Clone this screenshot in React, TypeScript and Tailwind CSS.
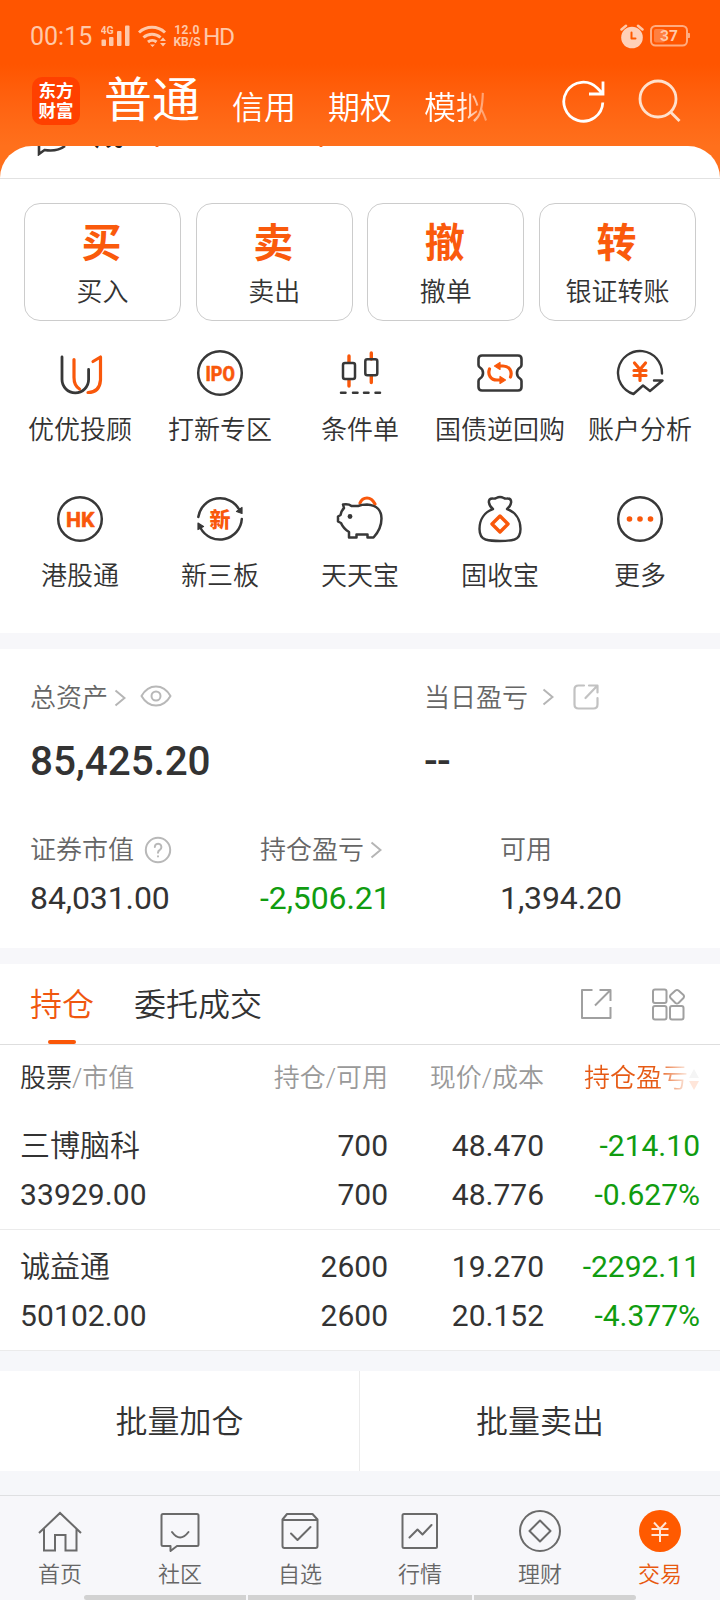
import React from "react";

const INK = "#383838";
const OR = "#f9580b";

function Svg({ w, h = w, className = "", children }: { w: number; h?: number; className?: string; children: React.ReactNode }) {
  return (
    <svg width={w} height={h} viewBox={`0 0 ${w} ${h}`} fill="none" strokeLinecap="round" strokeLinejoin="round" className={`block shrink-0 ${className}`}>
      {children}
    </svg>
  );
}

function StatusBar() {
  return (
    <div className="flex h-[72px] items-center font-normal text-[#ffc8a8]">
      <span className="ml-[30px] w-[71px] pt-[2px] text-[25px] leading-[70px] whitespace-nowrap">00:15</span>
      <svg width="30" height="22" viewBox="0 0 30 22" fill="currentColor" className="block shrink-0">
        <text x="-0.500" y="8.500" fontSize="10.500" fontWeight="700" fontFamily="Roboto">4G</text>
        <rect x="0.500" y="14.500" width="4.500" height="6.500" rx="1" />
        <rect x="8" y="12" width="4.500" height="9" rx="1" />
        <rect x="16" y="6" width="4.500" height="15" rx="1" />
        <rect x="24" y="0.500" width="4.500" height="20.500" rx="1" />
      </svg>
      <Svg w={30} h={24} className="ml-[7px]">
        <g stroke="currentColor" strokeWidth="3" strokeLinecap="butt">
          <path d="M1 8.500a19 19 0 0 1 26 0" />
          <path d="M5.500 13.500a12.500 12.500 0 0 1 17 0" />
          <path d="M10 18a6.500 6.500 0 0 1 8.500 0" />
        </g>
        <path d="M12 20.500h5l-2.500 2.500zM22 17l3-3.500 3 3.500zM22 19l3 3.500 3-3.500z" fill="currentColor" />
      </Svg>
      <div className="ml-[4px] w-[30px] text-center text-[12px] leading-[12px] font-bold whitespace-nowrap">
        <div className="tracking-[0.4px]">12.0</div>
        <div>KB/S</div>
      </div>
      <span className="ml-[1px] pt-[2px] text-[24.500px] leading-[70px] tracking-[-1.5px]">HD</span>
      <Svg w={24} h={25} className="ml-auto">
        <circle cx="12" cy="13.500" r="10.800" fill="#ffd0b8" />
        <path d="M1.500 5.500L6 1.800M22.500 5.500L18 1.800" stroke="#ffc8a8" strokeWidth="2.500" />
        <path d="M11.500 8.500v6h4" stroke="#ff5a00" strokeWidth="2" />
      </Svg>
      <Svg w={40} h={22} className="mr-[30px] ml-[6px]">
        <rect x="1" y="1" width="36" height="19.500" rx="4.500" stroke="#ffac80" strokeWidth="2" />
        <rect x="4" y="4" width="11" height="13.500" rx="2" fill="#ff8040" />
        <path d="M38 8.500h1.500v4H38z" fill="#ffac80" stroke="#ffac80" />
        <text x="19" y="16" textAnchor="middle" fontSize="15.500" fontWeight="700" fontFamily="Roboto" fill="#ffc8a8">37</text>
      </Svg>
    </div>
  );
}

function Header() {
  return (
    <header className="h-[178px] bg-linear-to-b from-[#ff5500] from-[36%] to-[#ff701c] to-[82%]">
      <StatusBar />
      <div className="flex h-[74px] text-white">
        <div className="mt-[5px] ml-8 flex h-12 w-12 flex-col items-center justify-center rounded-[10px] bg-[#ff4000] text-[17.500px] leading-[20px] font-bold">
          <span>东方</span>
          <span>财富</span>
        </div>
        <div className="ml-6 flex gap-8">
          <span className="text-[48px] leading-[58px] font-normal">普通</span>
          <span className="pt-[6px] text-[32px] leading-[60px]">信用</span>
          <span className="pt-[6px] text-[32px] leading-[60px]">期权</span>
          <span className="bg-linear-to-r from-white from-[55%] to-white/30 bg-clip-text pt-[6px] text-[32px] leading-[60px] text-transparent">模拟</span>
        </div>
        <Svg w={44} className="mt-[7px] ml-[73px]">
          <path d="M41.800 23.500A19.500 19.500 0 1 1 36.500 9.300L41 14M42 2.500v12.500H28" stroke="#fff" strokeWidth="2.800" strokeLinecap="butt" strokeLinejoin="miter" />
        </Svg>
        <Svg w={44} className="mt-[7px] ml-[32px]">
          <g stroke="#ffe0cc" strokeWidth="2.800" strokeLinecap="butt">
            <circle cx="21" cy="20" r="18" />
            <path d="M33.500 33L42.500 42" />
          </g>
        </Svg>
      </div>
    </header>
  );
}

const trades = [
  ["买", "买入"],
  ["卖", "卖出"],
  ["撤", "撤单"],
  ["转", "银证转账"],
];

const Ring = () => <circle cx="24" cy="24" r="21.800" stroke={INK} strokeWidth="2.500" />;

const shortcuts: { label: string; icon: React.ReactNode }[] = [
  {
    label: "优优投顾",
    icon: (
      <g strokeWidth="2.800">
        <path d="M6 8v22.500a13.300 13.300 0 0 0 26.600 0V20.500" stroke={INK} />
        <path d="M18 10.500v18q0 8 5.500 11.500M37 12.500l7.500-4.500V31q-1 12.500-12.500 12.500" stroke={OR} strokeWidth="3.200" />
      </g>
    ),
  },
  {
    label: "打新专区",
    icon: (
      <>
        <Ring />
        <text x="9.500" y="31.500" fontSize="21" fontWeight="800" fontFamily="Roboto" fill={OR} stroke={OR} strokeWidth="0.500" textLength="29.500" lengthAdjust="spacingAndGlyphs">IPO</text>
      </>
    ),
  },
  {
    label: "条件单",
    icon: (
      <>
        <path d="M13 7v6M13 31v6M35.300 4v6M35.300 27v6.500" stroke={OR} strokeWidth="3.400" />
        <g stroke={INK} strokeWidth="2.500">
          <rect x="7" y="14" width="12" height="16" rx="2" />
          <rect x="29.300" y="10.300" width="12" height="16" rx="2" />
          <path d="M5 43.700h4.500M17 43.700h4.500M28 43.700h4.500M39.500 43.700H44" />
        </g>
      </>
    ),
  },
  {
    label: "国债逆回购",
    icon: (
      <>
        <path d="M6 6.500h36q3.500 0 3.500 3.500v6q0 1.500-1.500 2.500a6.500 6.500 0 0 0 0 11q1.500 1 1.500 2.500v6q0 3.500-3.500 3.500H6q-3.500 0-3.500-3.500v-6q0-1.500 1.500-2.500a6.500 6.500 0 0 0 0-11q-1.500-1-1.500-2.500v-6q0-3.500 3.500-3.500z" stroke={INK} strokeWidth="2.600" />
        <path d="M23 17h4c6.500 0 9.500 5.500 7.500 11M25 31h-4c-6.500 0-9.500-5.500-7.500-11" stroke={OR} strokeWidth="3.200" />
        <path d="M18.500 17l5.500-3.500v7zM29.500 31l-5.500-3.500v7z" fill={OR} stroke={OR} strokeWidth="1.200" />
      </>
    ),
  },
  {
    label: "账户分析",
    icon: (
      <>
        <path d="M46 24.500A22 22 0 1 0 17.500 45L27 36.500l7 5.500L46.500 31.500H38" stroke={INK} strokeWidth="2.400" />
        <path d="M18.500 14l5.500 6.500 5.500-6.500M24 21v10.500M18 21.500h12M18 26.500h12" stroke={OR} strokeWidth="3.200" />
      </>
    ),
  },
  {
    label: "港股通",
    icon: (
      <>
        <Ring />
        <text x="10" y="31.500" fontSize="20.500" fontWeight="700" fontFamily="Roboto" fill={OR} stroke={OR} strokeWidth="0.600" textLength="28.500" lengthAdjust="spacingAndGlyphs">HK</text>
      </>
    ),
  },
  {
    label: "新三板",
    icon: (
      <>
        <path d="M2.300 22A22 22 0 0 1 43.500 15M45.800 24A22 22 0 0 1 4.500 33" stroke={INK} strokeWidth="2.500" />
        <path d="M40.500 16.500l5.500-4v6zM7.500 31.500l-5.500 3v-6.500z" fill={INK} stroke={INK} strokeWidth="1.200" />
        <text x="24" y="31.500" textAnchor="middle" fontSize="21" fontWeight="900" fontFamily="Noto Sans CJK SC" fill={OR}>新</text>
      </>
    ),
  },
  {
    label: "天天宝",
    icon: (
      <>
        <path d="M24 8q2-5 7-5t8 6" stroke={OR} strokeWidth="3.200" />
        <path d="M22 11q4-1.500 9-1.500C41 10 45.500 16 45.500 23.500c0 6-2.500 13-8 19h-6V39.500H20.500v3H13V37C9 34.500 6.500 31.500 5 28l-3-1.500v-5L4.500 20c.5-3 1.500-5 3.500-7L7 9.500q5.500-1 8.500 1.500z" stroke={INK} strokeWidth="2.500" />
        <circle cx="14" cy="21.500" r="2.400" fill={INK} />
      </>
    ),
  },
  {
    label: "固收宝",
    icon: (
      <>
        <path d="M17 14q-3.500-2.500-4.200-7 0-3.500 3.500-3.500 2.500.5 4-.5 3.700-2 7.400 0 1.500 1 4 .5 3.500 0 3.500 3.500-.7 4.500-4.200 7c8.500 3 13.500 10.500 13.500 20 0 5.500-1.500 9-6 10.500Q33 46 24 46T9.500 44.500C5 43 3.500 39.500 3.500 34 3.500 24.500 8.500 17 17 14z" stroke={INK} strokeWidth="2.400" />
        <path d="M24 21l8 8-8 8-8-8z" stroke={OR} strokeWidth="3.400" />
      </>
    ),
  },
  {
    label: "更多",
    icon: (
      <>
        <Ring />
        <g fill={OR}>
          <circle cx="13.500" cy="24" r="2.800" />
          <circle cx="24" cy="24" r="2.800" />
          <circle cx="34.500" cy="24" r="2.800" />
        </g>
      </>
    ),
  },
];

function Chevron({ className = "" }: { className?: string }) {
  return (
    <Svg w={12} h={18} className={className}>
      <path d="M1.500 1.500L10.500 9l-9 7.500" stroke="#b5b5b5" strokeWidth="2" strokeLinecap="butt" strokeLinejoin="miter" />
    </Svg>
  );
}

function Assets() {
  return (
    <section className="h-[299px] shrink-0 text-[26px] text-[#666]">
      <div className="flex h-[97px]">
        <div className="flex w-[424px] items-center pl-[30px]">
          <span className="pt-px">总资产</span>
          <Chevron className="mt-px ml-[6px]" />
          <Svg w={32} h={22} className="-mt-[3px] ml-[14px]">
            <g stroke="#b8b8b8" strokeWidth="2">
              <path d="M1.500 11Q7 1.500 16 1.500T30.500 11Q25 20.500 16 20.500T1.500 11z" />
              <circle cx="16" cy="11" r="4.500" />
            </g>
          </Svg>
        </div>
        <div className="flex items-center">
          <span className="pt-px">当日盈亏</span>
          <Chevron className="-mt-px ml-[14px]" />
          <Svg w={28} className="-mt-px ml-[18px]">
            <path d="M12 2.500H6.500q-4 0-4 4v15q0 4 4 4h15q4 0 4-4V15M13.500 15L25 3M17 2.500h8.500v7" stroke="#c2c2c2" strokeWidth="2.200" />
          </Svg>
        </div>
      </div>
      <div className="flex h-[30px] text-[40.500px] leading-[30px] font-medium text-[#333]">
        <div className="w-[424px] pl-[30px] tracking-[-0.1px]">85,425.20</div>
        <div className="tracking-[-0.7px]">--</div>
      </div>
      <div className="flex pt-[55px]">
        <div className="w-[260px] pl-[30px]">
          <div className="flex h-[38px] items-center">
            <span>证券市值</span>
            <Svg w={28} className="ml-[10px]">
              <circle cx="14" cy="14" r="12.200" stroke="#b8b8b8" strokeWidth="2" />
              <path d="M10.800 11a3.300 3.300 0 1 1 5 2.800q-1.800 1-1.800 3M14 20.200v.3" stroke="#b8b8b8" strokeWidth="2" />
            </Svg>
          </div>
          <div className="pt-[10px] text-[32px] leading-[38px] font-normal tracking-[-0.1px] text-[#333]">84,031.00</div>
        </div>
        <div className="w-[240px]">
          <div className="flex h-[38px] items-center">
            <span>持仓盈亏</span>
            <Chevron className="ml-[6px]" />
          </div>
          <div className="pt-[10px] text-[32px] leading-[38px] font-normal tracking-[-0.1px] text-[#109c10]">-2,506.21</div>
        </div>
        <div>
          <div className="flex h-[38px] items-center">可用</div>
          <div className="pt-[10px] text-[32px] leading-[38px] font-normal tracking-[-0.1px] text-[#333]">1,394.20</div>
        </div>
      </div>
    </section>
  );
}

const holdings = [
  { name: "三博脑科", value: "33929.00", cells: [["700", "700"], ["48.470", "48.776"], ["-214.10", "-0.627%"]] },
  { name: "诚益通", value: "50102.00", cells: [["2600", "2600"], ["19.270", "20.152"], ["-2292.11", "-4.377%"]] },
];

function Holdings() {
  return (
    <section className="shrink-0">
      <div className="flex h-[81px] items-start border-b border-[#dedede] pl-[30px] text-[32px] leading-[83px] text-[#333]">
        <div className="flex w-16 flex-col items-center text-[#f0570f]">
          <span className="h-[76px]">持仓</span>
          <span className="h-1 w-7 rounded-sm bg-[#fa5708]" />
        </div>
        <span className="ml-10">委托成交</span>
        <Svg w={32} className="mt-[24px] ml-auto">
          <path d="M12.500 2H2v28h28.500V19M15 17.500L29.500 3M19.500 2h11v11" stroke="#a0a0a0" strokeWidth="2" strokeLinecap="butt" />
        </Svg>
        <Svg w={34} className="mt-[24px] mr-[35px] ml-[39px]">
          <g stroke="#a0a0a0" strokeWidth="2">
            <rect x="2" y="1.500" width="13.500" height="13.500" rx="2" />
            <rect x="2" y="18" width="13.500" height="13.500" rx="2" />
            <rect x="19" y="18" width="13.500" height="13.500" rx="2" />
            <path d="M24.500 2.500q1.500-1 3 0l5 4.500q1 1.500 0 3l-5 5q-1.500 1-3 0l-5-5q-1-1.500 0-3z" />
          </g>
        </Svg>
      </div>
      <div className="grid h-[64px] grid-cols-[200px_168px_156px_156px] px-5 text-right text-[26px] leading-[67px] whitespace-nowrap text-[#999]">
        <div className="text-left">
          <span className="text-[#333]">股票</span>/市值
        </div>
        <div>持仓/可用</div>
        <div>现价/成本</div>
        <div className="flex items-center justify-end">
          <span className="bg-linear-to-r from-[#e65a14] from-[70%] to-[#e65a14]/10 bg-clip-text text-transparent">持仓盈亏</span>
          <Svg w={12} h={24}>
            <path d="M1 11L6 2l5 9z" fill="#f5f5f5" />
            <path d="M1 14l5 9 5-9z" fill="#ffe6da" />
          </Svg>
        </div>
      </div>
      {holdings.map((h) => (
        <div key={h.name} className="grid h-[121px] grid-cols-[200px_168px_156px_156px] border-b border-[#ebebeb] px-5 pt-[12px] text-right text-[30px] leading-[49px] font-normal whitespace-nowrap text-[#333]">
          <div className="text-left">
            <div className="[font-weight:350]">{h.name}</div>
            <div className="tracking-[0.1px]">{h.value}</div>
          </div>
          {h.cells.map((pair, i) => (
            <div key={i} className={i === 2 ? "text-[#109c10]" : ""}>
              <div>{pair[0]}</div>
              <div>{pair[1]}</div>
            </div>
          ))}
        </div>
      ))}
    </section>
  );
}

const tabs: { label: string; icon: React.ReactNode }[] = [
  { label: "首页", icon: <path d="M2 22L23 2l21 20M7 18v21.500h11V24h10.500v15.500h11V18" strokeLinecap="butt" strokeLinejoin="miter" /> },
  {
    label: "社区",
    icon: (
      <>
        <path d="M6 3h34q1.500 0 1.500 1.500v29q0 1.500-1.500 1.500H20l-6.500 5v-5H6q-1.500 0-1.500-1.500v-29Q4.500 3 6 3z" />
        <path d="M15 21q8 11 16.500 0" />
      </>
    ),
  },
  {
    label: "自选",
    icon: (
      <>
        <path d="M10 3h25.500l5 5.500V35q0 2-2 2H7.500q-2 0-2-2V8.500zM5.500 9h35" />
        <path d="M14 22.500l6.500 6.500L33.500 16" />
      </>
    ),
  },
  {
    label: "行情",
    icon: (
      <>
        <rect x="5.500" y="3" width="34.500" height="34" rx="1.500" />
        <path d="M12.500 26.500l8-8 5 5L34.500 14" />
      </>
    ),
  },
  {
    label: "理财",
    icon: (
      <>
        <circle cx="23" cy="20" r="20" />
        <path d="M23 9.500L33.500 20 23 30.500 12.500 20z" />
      </>
    ),
  },
  {
    label: "交易",
    icon: (
      <>
        <circle cx="23" cy="20" r="21" fill="#ff5a00" stroke="none" />
        <path d="M17 11.500l6 6.500 6-6.500M23 18v13M14.500 18h17M14.500 24h17" stroke="#ffe4d6" strokeLinecap="butt" />
      </>
    ),
  },
];

export default function App() {
  return (
    <div className="flex h-[1600px] w-[720px] flex-col overflow-hidden bg-white font-['Roboto','Noto_Sans_CJK_SC',sans-serif] leading-[38px] [font-weight:350]">
      <Header />
      <div className="relative -mt-8 h-[33px] shrink-0 overflow-hidden rounded-t-[32px] border-b border-[#e2e2e2] bg-white">
        <Svg w={30} h={10} className="absolute top-0 left-[37px]">
          <path d="M2 0v8L7.500 4Q20 6 28 0" stroke={INK} strokeWidth="2.600" strokeLinecap="butt" strokeLinejoin="miter" />
        </Svg>
        <span className="absolute -top-[29.500px] left-[94px] text-[30px] leading-[36px] font-medium text-[#222]">成</span>
        <span className="absolute -top-[3px] left-[155px] h-1 w-1 rounded-full bg-[#ff5500]" />
        <span className="absolute -top-[3px] left-[319px] h-1 w-1 rounded-full bg-[#ff5500]" />
      </div>
      <section className="h-[454px] shrink-0 pt-6">
        <div className="grid grid-cols-4 gap-[14.500px] px-6">
          {trades.map(([big, label]) => (
            <div key={label} className="flex h-[118px] flex-col items-center rounded-2xl border border-[#cccccc] pt-[13px]">
              <span className="-ml-[2px] h-[55px] text-[40px] leading-[53px] font-bold text-[#fa5a0c]">{big}</span>
              <span className="text-[26px] leading-[40px] text-[#333]">{label}</span>
            </div>
          ))}
        </div>
        <div className="mt-7 grid grid-cols-5 px-[10px]">
          {shortcuts.map((s) => (
            <div key={s.label} className="flex h-[146px] flex-col items-center whitespace-nowrap">
              <Svg w={48}>{s.icon}</Svg>
              <span className="mt-[14px] text-[26px] leading-[38px] text-[#333]">{s.label}</span>
            </div>
          ))}
        </div>
      </section>
      <div className="h-4 shrink-0 bg-[#f7f7fa]" />
      <Assets />
      <div className="h-4 shrink-0 bg-[#f7f7fa]" />
      <Holdings />
      <div className="h-[144px] shrink-0 bg-[#f6f7fa] pt-[20px]">
        <div className="flex h-[100px] w-full bg-white text-[32px] leading-[102px] text-[#333]">
          <span className="w-[360px] border-r border-[#ebebeb] text-center">批量加仓</span>
          <span className="w-[360px] text-center">批量卖出</span>
        </div>
      </div>
      <nav className="flex h-[105px] shrink-0 flex-col border-t border-[#dfe0e2] bg-[#f7f7fa]">
        <div className="flex h-[99px] pt-[14px]">
          {tabs.map((t) => (
            <div key={t.label} className={`flex w-[120px] flex-col items-center text-[22px] leading-[32px] ${t.label === "交易" ? "text-[#e8590f]" : "text-[#666]"}`}>
              <Svg w={46} h={42}>
                <g stroke="#6a6a6a" strokeWidth="2" transform="translate(0 1)">{t.icon}</g>
              </Svg>
              <span className="mt-[7px]">{t.label}</span>
            </div>
          ))}
        </div>
        <div className="mx-auto flex h-[5px] w-[552px] gap-[2px] overflow-hidden rounded-sm">
          <span className="w-[162px] bg-[#d2d2d2]" />
          <span className="flex-1 bg-[#d2d2d2]" />
          <span className="w-[162px] bg-[#d2d2d2]" />
        </div>
      </nav>
    </div>
  );
}
